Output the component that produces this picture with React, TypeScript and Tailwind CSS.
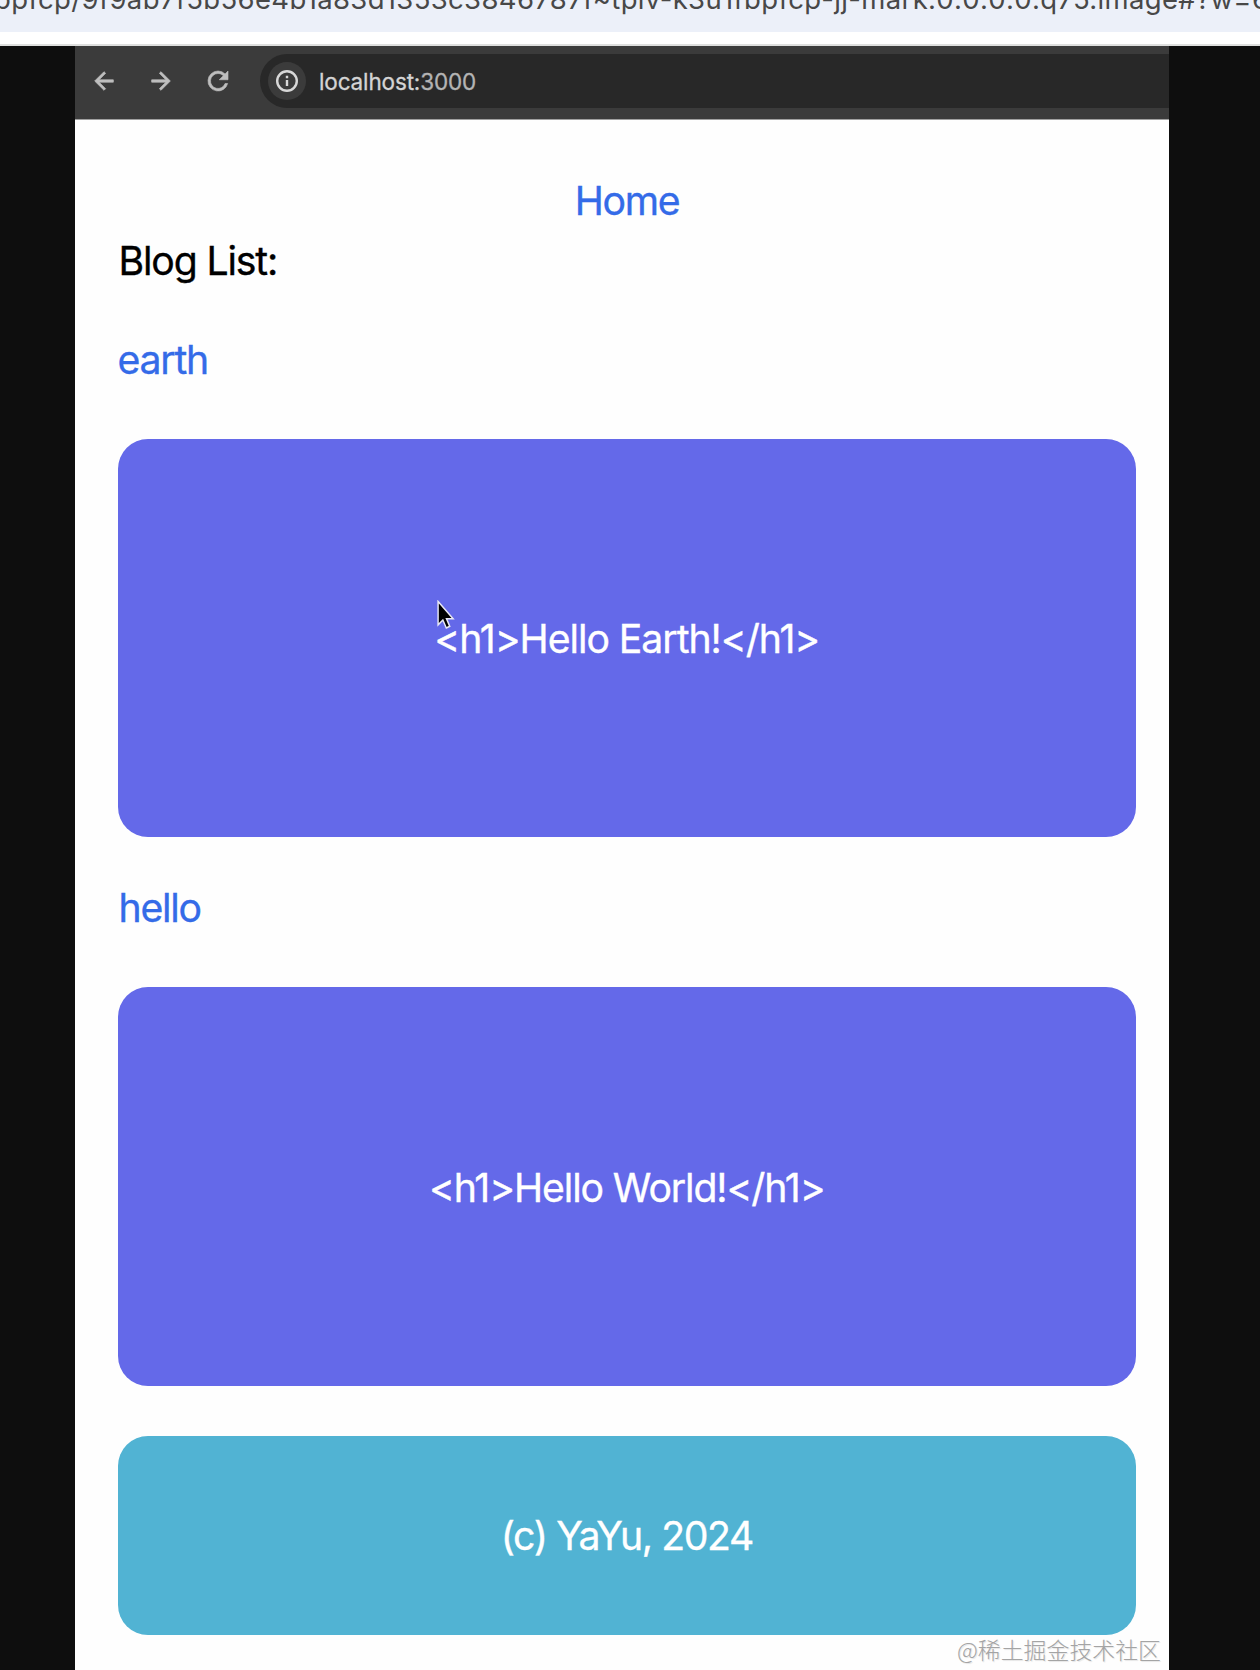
import React from "react";

const ink = "whitespace-nowrap text-[39.2px] font-normal leading-[60px] [-webkit-text-stroke:0.35px_currentColor]";

function BackIcon() {
  return (
    <svg width="28" height="28" viewBox="0 0 24 24" fill="#bebebe" stroke="#bebebe" strokeWidth="0.6">
      <path d="M20 11H7.83l5.59-5.59L12 4l-8 8 8 8 1.41-1.41L7.83 13H20v-2z" />
    </svg>
  );
}

function ForwardIcon() {
  return (
    <svg width="28" height="28" viewBox="0 0 24 24" fill="#bebebe" stroke="#bebebe" strokeWidth="0.6">
      <path d="M12 4l-1.41 1.41L16.17 11H4v2h12.17l-5.58 5.59L12 20l8-8z" />
    </svg>
  );
}

function ReloadIcon() {
  return (
    <svg width="30" height="30" viewBox="0 0 24 24" fill="#bebebe" stroke="#bebebe" strokeWidth="0.5">
      <path d="M17.65 6.35A7.95 7.95 0 0 0 12 4a8 8 0 1 0 7.73 10h-2.08A6 6 0 1 1 12 6c1.66 0 3.14.69 4.22 1.78L13 11h7V4l-2.35 2.35z" />
    </svg>
  );
}

function InfoIcon() {
  return (
    <svg width="24" height="24" viewBox="0 0 24 24" fill="none" stroke="#d8d8d8" strokeWidth="2.4">
      <circle cx="12" cy="12" r="9.8" />
      <path d="M12 11v6M12 6.7v2.6" />
    </svg>
  );
}

function Pointer() {
  return (
    <svg className="absolute left-[437px] top-[600px]" width="19" height="30" viewBox="0 0 21 31" preserveAspectRatio="none">
      <path d="M1.2 1.5v24.2l5.3-5 3.8 8.2 3.8-1.7-3.6-7.9h7.3z" fill="#000" stroke="#e8e8f4" strokeWidth="1.6" />
    </svg>
  );
}

export default function App() {
  return (
    <div className="relative flex h-[1670px] w-[1260px] flex-col overflow-hidden bg-[#0e0e0e] font-['Inter',sans-serif]">
      <div className="flex h-8 shrink-0 items-start overflow-hidden bg-[#ecf0f9]">
        <div className="-ml-[6px] -mt-[19px] whitespace-nowrap text-[27.5px] leading-9 tracking-[0.34px] text-[#484848]">
          bpfcp/9f9ab7f5b56e4b1a83d1353c3846787f~tplv-k3u1fbpfcp-jj-mark:0:0:0:0:q75.image#?w=600
        </div>
      </div>
      <div className="h-[14px] shrink-0 border-b-2 border-[#dedfde] bg-white" />
      <div className="ml-[75px] flex w-[1094px] flex-1 flex-col bg-[#fefefe]">
        <header className="flex h-[74px] shrink-0 items-start border-b border-[#a0a0a0] bg-[#3b3b3b]">
          <div className="mt-[20px] flex w-[185px] items-center pl-[15px]">
            <BackIcon />
            <div className="ml-[29px] flex"><ForwardIcon /></div>
            <div className="ml-[28px] flex"><ReloadIcon /></div>
          </div>
          <div className="mt-2 flex h-[54px] flex-1 items-center rounded-l-full bg-[#282828] pl-2">
            <div className="flex size-[38px] items-center justify-center rounded-full bg-[#3b3b3b]">
              <InfoIcon />
            </div>
            <div className="ml-[13px] pt-px text-[22.5px] tracking-[-0.14px] text-[#d4d4d4] [-webkit-text-stroke:0.3px_currentColor]">
              localhost:<span className="text-[#b4b4b4]">3000</span>
            </div>
          </div>
        </header>
        <main className="flex flex-col pl-[43.5px] pr-[33.5px] pt-[51px]">
          <nav className={`${ink} text-center tracking-[-1.3px] text-[#346be8]`}>Home</nav>
          <h1 className={`${ink} tracking-[-1.15px] text-black`}>Blog List:</h1>
          <div className={`${ink} mt-[39px] -ml-px tracking-[-1.2px] text-[#346be8]`}>earth</div>
          <div className="-ml-[0.5px] mt-[48.5px] flex h-[398.5px] items-center justify-center rounded-[30px] bg-[#6469e9] pt-[3px] text-white">
            <span className={`${ink} tracking-[-1.03px]`}>{"<h1>Hello Earth!</h1>"}</span>
          </div>
          <div className={`${ink} mt-[41px] tracking-[-1.25px] text-[#346be8]`}>hello</div>
          <div className="-ml-[0.5px] mt-[49px] flex h-[399px] items-center justify-center rounded-[30px] bg-[#6469e9] pt-[2px] text-white">
            <span className={`${ink} tracking-[-1.1px]`}>{"<h1>Hello World!</h1>"}</span>
          </div>
          <footer className="-ml-[0.5px] mt-[49.5px] flex h-[199.5px] items-center justify-center rounded-[30px] bg-[#51b3d3] pt-[2px] text-white">
            <span className={`${ink} tracking-[-1.4px]`}>(c) YaYu, 2024</span>
          </footer>
        </main>
      </div>
      <Pointer />
      <div className="absolute left-[957px] top-[1633px] whitespace-nowrap font-['Noto_Sans_CJK_SC',sans-serif] text-[22.9px] font-light leading-8 text-[#a4a4a4] [text-shadow:1px_1px_1px_#e4e4e4]">
        @稀土掘金技术社区
      </div>
    </div>
  );
}
